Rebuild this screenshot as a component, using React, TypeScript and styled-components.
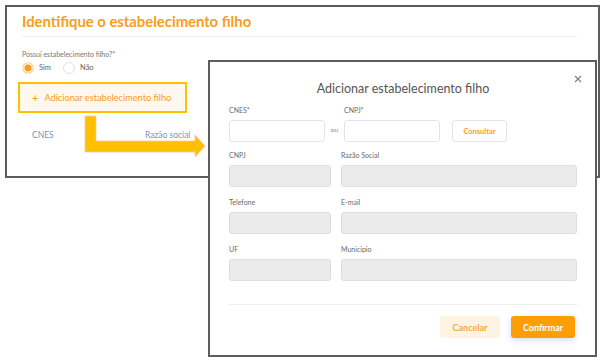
import React from 'react'
import { styled, createGlobalStyle } from 'styled-components'

const GlobalStyle = createGlobalStyle`
  html, body {
    margin: 0;
    padding: 0;
    background: #fff;
  }
  body {
    font-family: 'Lato', 'Open Sans', sans-serif;
  }
`

const orange = '#f99d1c'

const Stage = styled.div`
  position: relative;
  width: 605px;
  height: 364px;
  overflow: hidden;
  background: #fff;
`

/* screenshot of the page behind */
const PageShot = styled.div`
  position: absolute;
  left: 5px;
  top: 5px;
  width: 595px;
  height: 173px;
  box-sizing: border-box;
  border: 2px solid #5c5c5c;
  background: #fff;
  padding: 5px 21px 0 15px;
  display: flex;
  flex-direction: column;
  align-items: flex-start;
`
const PageTitle = styled.div`
  font-size: 14.8px;
  line-height: 18px;
  font-weight: 700;
  color: ${orange};
`
const Divider = styled.div<{ $top?: number }>`
  align-self: stretch;
  height: 1px;
  background: #eeeeee;
  margin-top: ${(p) => p.$top ?? 6}px;
`
const SmallLabel = styled.div`
  margin-top: 12px;
  font-size: 7px;
  line-height: 10px;
  color: #777;
`
const RadioRow = styled.div`
  margin-top: 2px;
  display: flex;
  align-items: center;
  height: 13px;
`
const Radio = styled.span<{ $checked?: boolean }>`
  width: 12px;
  height: 12px;
  box-sizing: border-box;
  border-radius: 50%;
  border: 1px solid ${(p) => (p.$checked ? '#fde2bb' : '#e1e1e1')};
  background: ${(p) => (p.$checked ? orange : '#fff')};
  box-shadow: ${(p) => (p.$checked ? 'inset 0 0 0 1.5px #fff3e2' : 'none')};
  margin-left: ${(p) => (p.$checked ? 0 : 12)}px;
`
const RadioText = styled.span`
  font-size: 7.5px;
  color: #666;
  margin-left: 5px;
`
const AddButton = styled.div`
  margin-top: 8px;
  margin-left: -4px;
  width: 169px;
  height: 31px;
  box-sizing: border-box;
  border: 2px solid #ffc000;
  background: #fff8ef;
  display: flex;
  align-items: center;
  padding-left: 12px;
  font-size: 9.2px;
  color: ${orange};
  gap: 6px;
`
const Plus = styled.span`
  font-size: 11px;
`
const TableHead = styled.div`
  margin-top: 17px;
  display: grid;
  grid-template-columns: 113px auto;
  padding-left: 10px;
  font-size: 8.5px;
  line-height: 10px;
  color: #7f93b2;
`

/* screenshot of the modal */
const ModalShot = styled.div`
  position: absolute;
  left: 208px;
  top: 60px;
  width: 389px;
  height: 297px;
  box-sizing: border-box;
  border: 2px solid #5c5c5c;
  background: #fff;
  padding: 19px 18px 0 19px;
  display: flex;
  flex-direction: column;
`
const CloseX = styled.svg`
  position: absolute;
  right: 13px;
  top: 13px;
`
const ModalTitle = styled.div`
  text-align: center;
  font-size: 12.5px;
  line-height: 16px;
  color: #555;
`
const Row = styled.div<{ $top: number }>`
  display: flex;
  align-items: flex-end;
  margin-top: ${(p) => p.$top}px;
`
const Grid = styled.div<{ $top: number }>`
  display: grid;
  grid-template-columns: 102px 1fr;
  column-gap: 10px;
  margin-top: ${(p) => p.$top}px;
`
const Field = styled.div<{ $w?: number }>`
  display: flex;
  flex-direction: column;
  width: ${(p) => (p.$w ? `${p.$w}px` : 'auto')};
`
const Label = styled.div`
  font-size: 7px;
  line-height: 10px;
  color: #6a6a6a;
  margin-bottom: 5px;
`
const Input = styled.div<{ $disabled?: boolean }>`
  height: 22px;
  box-sizing: border-box;
  border-radius: 3px;
  border: 1px solid ${(p) => (p.$disabled ? '#dedede' : '#e2e6ec')};
  background: ${(p) => (p.$disabled ? '#ebebeb' : '#fff')};
`
const Ou = styled.div`
  width: 19px;
  height: 22px;
  display: flex;
  justify-content: center;
  align-items: center;
  padding-bottom: 4px;
  box-sizing: border-box;
  font-size: 6.5px;
  color: #888;
`
const ConsultButton = styled.div`
  margin-left: 12px;
  width: 55px;
  height: 22px;
  box-sizing: border-box;
  border: 1px solid #e2e6ec;
  border-radius: 3px;
  display: flex;
  align-items: center;
  justify-content: center;
  font-size: 7.5px;
  font-weight: 700;
  color: ${orange};
`
const Actions = styled.div`
  margin-top: 11px;
  display: flex;
  justify-content: flex-end;
  gap: 11px;
  padding-right: 2px;
`
const ActionButton = styled.div<{ $primary?: boolean; $w: number }>`
  width: ${(p) => p.$w}px;
  height: 22px;
  border-radius: 3px;
  display: flex;
  align-items: center;
  justify-content: center;
  font-size: 9px;
  font-weight: 700;
  background: ${(p) => (p.$primary ? '#ff9e00' : '#fff4e2')};
  color: ${(p) => (p.$primary ? '#fff' : '#f8a849')};
  box-shadow: ${(p) => (p.$primary ? '0 2px 6px rgba(90, 150, 230, 0.3)' : 'none')};
`

const Arrow = styled.svg`
  position: absolute;
  left: 0;
  top: 0;
  pointer-events: none;
`

export default function App() {
  return (
    <Stage>
      <GlobalStyle />
      <PageShot>
        <PageTitle>Identifique o estabelecimento filho</PageTitle>
        <Divider />
        <SmallLabel>Possui estabelecimento filho?*</SmallLabel>
        <RadioRow>
          <Radio $checked />
          <RadioText>Sim</RadioText>
          <Radio />
          <RadioText>Não</RadioText>
        </RadioRow>
        <AddButton>
          <Plus>+</Plus>
          <span>Adicionar estabelecimento filho</span>
        </AddButton>
        <TableHead>
          <span>CNES</span>
          <span>Razão social</span>
        </TableHead>
      </PageShot>

      <Arrow width="605" height="364" viewBox="0 0 605 364">
        <polygon
          points="85,116 96,116 96,141 195,141 195,135 205,146 195,157 195,152 85,152"
          fill="#ffc000"
          stroke="#f6c9a4"
          strokeWidth="0.8"
        />
      </Arrow>

      <ModalShot>
        <CloseX width="8" height="8" viewBox="0 0 8 8">
          <path d="M1 1 L7 7 M7 1 L1 7" stroke="#6b7f99" strokeWidth="1.1" />
        </CloseX>
        <ModalTitle>Adicionar estabelecimento filho</ModalTitle>
        <Row $top={8}>
          <Field $w={96}>
            <Label>CNES*</Label>
            <Input />
          </Field>
          <Ou>ou</Ou>
          <Field $w={96}>
            <Label>CNPJ*</Label>
            <Input />
          </Field>
          <ConsultButton>Consultar</ConsultButton>
        </Row>
        <Grid $top={8}>
          <Field>
            <Label>CNPJ</Label>
            <Input $disabled />
          </Field>
          <Field>
            <Label>Razão Social</Label>
            <Input $disabled />
          </Field>
        </Grid>
        <Grid $top={10}>
          <Field>
            <Label>Telefone</Label>
            <Input $disabled />
          </Field>
          <Field>
            <Label>E-mail</Label>
            <Input $disabled />
          </Field>
        </Grid>
        <Grid $top={10}>
          <Field>
            <Label>UF</Label>
            <Input $disabled />
          </Field>
          <Field>
            <Label>Municipio</Label>
            <Input $disabled />
          </Field>
        </Grid>
        <Divider $top={23} />
        <Actions>
          <ActionButton $w={60}>Cancelar</ActionButton>
          <ActionButton $primary $w={64}>Confirmar</ActionButton>
        </Actions>
      </ModalShot>
    </Stage>
  )
}
